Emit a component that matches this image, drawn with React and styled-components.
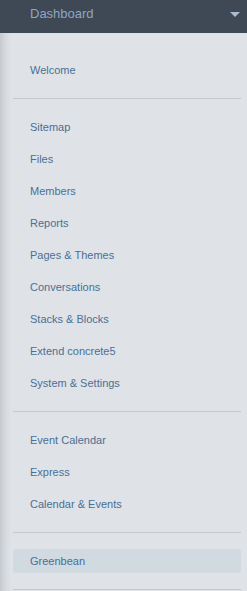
import React from "react";
import styled, { createGlobalStyle } from "styled-components";

const GlobalStyle = createGlobalStyle`
  html, body {
    margin: 0;
    padding: 0;
    background: #dfe3e7;
  }
  body {
    font-family: "Liberation Sans", Arial, sans-serif;
  }
`;

const Panel = styled.div`
  width: 247px;
  height: 591px;
  overflow: hidden;
  display: flex;
  flex-direction: column;
  background: linear-gradient(to right, #c6cacf 0px, #d5d9dd 5px, #dfe3e7 11px);
`;

const Header = styled.div`
  height: 33px;
  flex-shrink: 0;
  display: flex;
  align-items: center;
  justify-content: space-between;
  padding: 0 7px 6px 30px;
  background: #3e4955;
  color: #8ea7c0;
  font-size: 13px;
  box-sizing: border-box;
`;

const Caret = styled.span`
  width: 0;
  height: 0;
  border-left: 5px solid transparent;
  border-right: 5px solid transparent;
  border-top: 5px solid #aabcce;
  margin-top: 2px;
`;

const Section = styled.ul`
  list-style: none;
  margin: 0 6px 0 13px;
  padding: ${(p) => p.$top ?? 12}px 0 ${(p) => p.$bottom ?? 12}px;
  border-bottom: 1px solid #c5c9cd;
`;

const Item = styled.li`
  height: ${(p) => (p.$active ? 24 : 32)}px;
  display: flex;
  align-items: center;
  padding-left: 17px;
  font-size: 11px;
  color: #4a6f96;
  border-radius: 3px;
  background: ${(p) => (p.$active ? "#d1d9e1" : "transparent")};
`;

const groups = [
  { top: 21, items: ["Welcome"] },
  {
    items: [
      "Sitemap",
      "Files",
      "Members",
      "Reports",
      "Pages & Themes",
      "Conversations",
      "Stacks & Blocks",
      "Extend concrete5",
      "System & Settings",
    ],
  },
  { items: ["Event Calendar", "Express", "Calendar & Events"] },
];

export default function App() {
  return (
    <>
      <GlobalStyle />
      <Panel>
        <Header>
          Dashboard
          <Caret />
        </Header>
        {groups.map((g, i) => (
          <Section key={i} $top={g.top}>
            {g.items.map((label) => (
              <Item key={label}>{label}</Item>
            ))}
          </Section>
        ))}
        <Section $top={16} $bottom={16}>
          <Item $active>Greenbean</Item>
        </Section>
      </Panel>
    </>
  );
}
